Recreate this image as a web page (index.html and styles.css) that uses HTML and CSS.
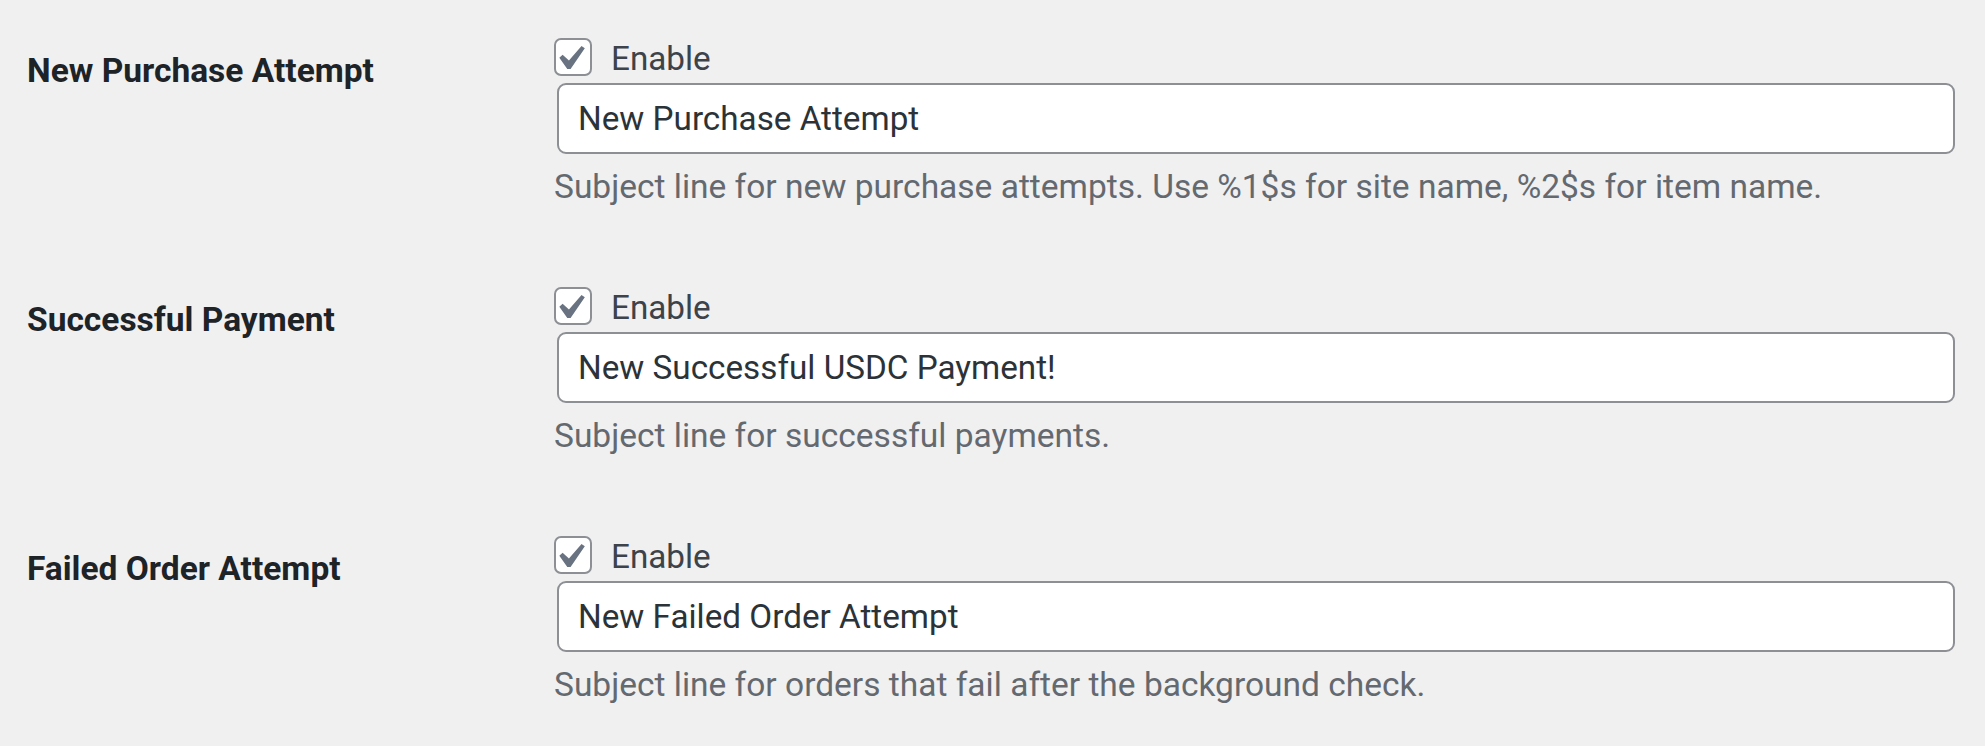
FILE: index.html
```html
<!DOCTYPE html>
<html lang="en">
<head>
<meta charset="utf-8">
<title>Email settings</title>
<link rel="stylesheet" href="styles.css">
</head>
<body>
<div class="form-table">
  <div class="row">
    <div class="th">New Purchase Attempt</div>
    <div class="td">
      <label class="enable">
        <span class="box"><svg viewBox="3.6 1.6 15.5 15.5" width="38" height="38"><path d="M14.83 4.89l1.34.94-5.81 8.38H9.02L5.78 9.67l1.34-1.25 2.57 2.4z" fill="#687280"/></svg></span>
        <span class="enable-text">Enable</span>
      </label>
      <input class="field" type="text" value="New Purchase Attempt">
      <p class="description">Subject line for new purchase attempts. Use %1$s for site name, %2$s for item name.</p>
    </div>
  </div>
  <div class="row">
    <div class="th">Successful Payment</div>
    <div class="td">
      <label class="enable">
        <span class="box"><svg viewBox="3.6 1.6 15.5 15.5" width="38" height="38"><path d="M14.83 4.89l1.34.94-5.81 8.38H9.02L5.78 9.67l1.34-1.25 2.57 2.4z" fill="#687280"/></svg></span>
        <span class="enable-text">Enable</span>
      </label>
      <input class="field" type="text" value="New Successful USDC Payment!">
      <p class="description">Subject line for successful payments.</p>
    </div>
  </div>
  <div class="row">
    <div class="th">Failed Order Attempt</div>
    <div class="td">
      <label class="enable">
        <span class="box"><svg viewBox="3.6 1.6 15.5 15.5" width="38" height="38"><path d="M14.83 4.89l1.34.94-5.81 8.38H9.02L5.78 9.67l1.34-1.25 2.57 2.4z" fill="#687280"/></svg></span>
        <span class="enable-text">Enable</span>
      </label>
      <input class="field" type="text" value="New Failed Order Attempt">
      <p class="description">Subject line for orders that fail after the background check.</p>
    </div>
  </div>
</div>
</body>
</html>
```

FILE: styles.css
```css
html, body {
  margin: 0;
  padding: 0;
  background: #f0f0f1;
}

body {
  font-family: Roboto, "Liberation Sans", sans-serif;
  font-size: 33.25px;
  color: #3c434a;
}

.form-table {
  padding-left: 27px;
  padding-right: 30px;
}

.row {
  display: flex;
  align-items: flex-start;
  height: 249px;
}

.th {
  width: 527px;
  flex: none;
  padding-top: 49px;
  line-height: 43px;
  font-weight: 700;
  font-size: 33.5px;
  color: #1d2327;
}

.td {
  flex: 1;
  padding-top: 38px;
  display: flex;
  flex-direction: column;
  align-items: stretch;
}

.enable {
  display: flex;
  align-items: flex-start;
  height: 42px;
}

.box {
  width: 34px;
  height: 34px;
  border: 2px solid #8c8f94;
  border-radius: 7px;
  background: #fff;
  display: flex;
  align-items: center;
  justify-content: center;
  overflow: visible;
  flex: none;
}

.box svg {
  flex: none;
  display: block;
}

.enable-text {
  margin-left: 19px;
  line-height: 42px;
  color: #3c434a;
}

.field {
  box-sizing: border-box;
  margin: 3px 0 0 3px;
  height: 71px;
  width: calc(100% - 3px);
  border: 2px solid #8c8f94;
  border-radius: 9px;
  background: #fff;
  padding: 0 19px;
  font-family: Roboto, "Liberation Sans", sans-serif;
  font-size: 33.25px;
  color: #2c3338;
  outline: none;
}

.description {
  margin: 10.5px 0 0 0;
  line-height: 43px;
  font-size: 33.5px;
  color: #646970;
}
```
